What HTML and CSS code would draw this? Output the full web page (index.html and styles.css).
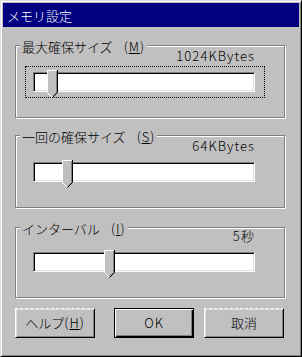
FILE: index.html
```html
<!DOCTYPE html>
<html lang="ja">
<head>
<meta charset="utf-8">
<title>メモリ設定</title>
<link rel="stylesheet" href="styles.css">
</head>
<body>
<div class="window">
  <div class="titlebar">メモリ設定</div>
  <div class="content">
    <div class="group g1">
      <div class="legend">最大確保サイズ<span class="mn">(<u>M</u>)</span></div>
      <div class="value">1024KBytes</div>
      <div class="slider focus">
        <div class="track">
          <svg class="thumb" style="left:13px" width="11" height="28" viewBox="0 0 11 28">
            <polygon points="0,0 11,0 11,22 5.5,27.5 0,22" fill="#c0c0c0"/>
            <polyline points="0.5,22.5 0.5,0.5 10,0.5" fill="none" stroke="#fff"/>
            <polyline points="0.5,22.5 5,27" fill="none" stroke="#fff"/>
            <polyline points="9.5,1 9.5,22.3 5.5,26.3" fill="none" stroke="#808080"/>
            <polyline points="10.5,0 10.5,22.5 5.5,27.5" fill="none" stroke="#000"/>
          </svg>
        </div>
      </div>
    </div>
    <div class="group g2">
      <div class="legend">一回の確保サイズ<span class="mn">(<u>S</u>)</span></div>
      <div class="value">64KBytes</div>
      <div class="slider">
        <div class="track">
          <svg class="thumb" style="left:28px" width="11" height="28" viewBox="0 0 11 28">
            <polygon points="0,0 11,0 11,22 5.5,27.5 0,22" fill="#c0c0c0"/>
            <polyline points="0.5,22.5 0.5,0.5 10,0.5" fill="none" stroke="#fff"/>
            <polyline points="0.5,22.5 5,27" fill="none" stroke="#fff"/>
            <polyline points="9.5,1 9.5,22.3 5.5,26.3" fill="none" stroke="#808080"/>
            <polyline points="10.5,0 10.5,22.5 5.5,27.5" fill="none" stroke="#000"/>
          </svg>
        </div>
      </div>
    </div>
    <div class="group g3">
      <div class="legend">インターバル<span class="mn">(<u>I</u>)</span></div>
      <div class="value">5秒</div>
      <div class="slider">
        <div class="track">
          <svg class="thumb" style="left:70px" width="11" height="28" viewBox="0 0 11 28">
            <polygon points="0,0 11,0 11,22 5.5,27.5 0,22" fill="#c0c0c0"/>
            <polyline points="0.5,22.5 0.5,0.5 10,0.5" fill="none" stroke="#fff"/>
            <polyline points="0.5,22.5 5,27" fill="none" stroke="#fff"/>
            <polyline points="9.5,1 9.5,22.3 5.5,26.3" fill="none" stroke="#808080"/>
            <polyline points="10.5,0 10.5,22.5 5.5,27.5" fill="none" stroke="#000"/>
          </svg>
        </div>
      </div>
    </div>
    <div class="buttons">
      <button class="btn">ヘルプ<span class="mn-btn">(<u>H</u>)</span></button>
      <button class="btn default"><span class="ok">OK</span></button>
      <button class="btn cancel">取消</button>
    </div>
  </div>
</div>
</body>
</html>
```
FILE: styles.css
```css
* { box-sizing: border-box; }
html, body { margin: 0; padding: 0; background: #c0c0c0; }
body {
  font-family: "Noto Sans CJK JP", sans-serif;
  font-size: 13px;
  font-weight: 300;
  color: #000;
}
.window {
  width: 302px;
  height: 357px;
  background: #c0c0c0;
  border: 1px solid;
  border-color: #dfdfdf #000 #000 #dfdfdf;
  box-shadow: inset 1px 1px #fff, inset -1px -1px #808080;
  padding: 2px;
  display: flex;
  flex-direction: column;
}
.titlebar {
  height: 24px;
  line-height: 24px;
  background: #000080;
  color: #fff;
  padding-left: 4px;
  padding-top: 1px;
}
.content {
  display: flex;
  flex-direction: column;
}
.group {
  position: relative;
  margin-left: 12px;
  width: 270px;
  border: 1px solid #808080;
  box-shadow: inset 1px 1px #fff, 1px 1px #fff;
  padding: 2px 0 19px 0;
}
.g1 { margin-top: 18px; }
.g2 { margin-top: 17px; }
.g3 { margin-top: 19px; padding-top: 0; }
.legend {
  position: absolute;
  top: -7px;
  left: 4px;
  line-height: 15px;
  padding: 0 2px;
  background: #c0c0c0;
  white-space: nowrap;
}
.mn { margin-left: 11px; letter-spacing: 1px; }
.mn-btn, .ok { letter-spacing: 1px; }
.value {
  margin-left: 9px;
  width: 230px;
  text-align: right;
  line-height: 15px;
  height: 15px;
  letter-spacing: 1.1px;
}
.slider {
  margin: 3px 0 0 9px;
  width: 240px;
  border: 1px dotted transparent;
  padding: 5px 9px 5px 7px;
}
.slider.focus { border-color: #000; }
.track {
  position: relative;
  height: 20px;
  background: #fff;
  border: 1px solid;
  border-color: #808080 #fff #fff #808080;
  box-shadow: inset 1px 1px #000, inset -1px -1px #dfdfdf;
}
.thumb {
  position: absolute;
  top: -3px;
  display: block;
}
.buttons {
  display: flex;
  margin: 10px 0 0 12px;
}
.btn {
  width: 80px;
  height: 30px;
  margin: 0;
  padding: 0;
  font: inherit;
  color: #000;
  background: #c0c0c0;
  border: 1px solid;
  border-color: #fff #000 #000 #fff;
  border-top-style: dashed;
  box-shadow: inset 1px 1px #dfdfdf, inset -1px -1px #808080;
  line-height: 26px;
}
.btn.default {
  margin-left: 19px;
  border: 1px solid #000;
  box-shadow: inset 1px 1px #fff, inset -1px -1px #000, inset -2px -2px #808080;
}
.btn.cancel { margin-left: 10px; }
```
